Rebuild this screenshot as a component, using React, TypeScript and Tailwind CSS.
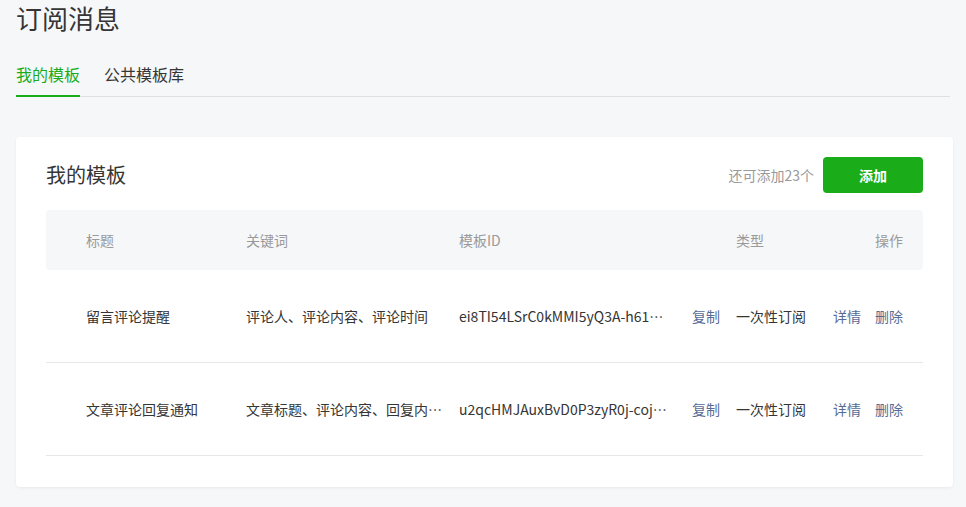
import React from "react";

type Row = {
  title: string;
  keywords: string;
  id: string;
  type: string;
};

const rows: Row[] = [
  {
    title: "留言评论提醒",
    keywords: "评论人、评论内容、评论时间",
    id: "ei8TI54LSrC0kMMI5yQ3A-h61Xb6sQ2wLmNpV7cR",
    type: "一次性订阅",
  },
  {
    title: "文章评论回复通知",
    keywords: "文章标题、评论内容、回复内容、回复时间",
    id: "u2qcHMJAuxBvD0P3zyR0j-coj8Kd2LxWq9TnE4fH",
    type: "一次性订阅",
  },
];

const font = { fontFamily: '"Noto Sans CJK SC", "Noto Sans", sans-serif' };

export default function App() {
  return (
    <div
      className="min-h-[507px] w-[966px] bg-[#f6f7f9] text-[#353535]"
      style={font}
    >
      <div className="px-4">
        <h1 className="h-[36px] text-[26px] leading-[36px] font-normal text-[#353535]">
          订阅消息
        </h1>

        {/* tabs */}
        <div className="mt-[24px] flex gap-6 border-b border-[#e0e0e0] text-[16px]">
          <div className="relative pb-[8px] leading-[28px] text-[#1aad19]">
            我的模板
            <span className="absolute -bottom-px left-0 h-[2px] w-full bg-[#1aad19]" />
          </div>
          <div className="pb-[8px] leading-[28px] text-[#353535]">公共模板库</div>
        </div>
      </div>

      {/* card */}
      <div className="mx-4 mt-[40px] w-[937px] rounded-[4px] bg-white px-[30px] pt-[20px] pb-[31px] shadow-[0_1px_3px_rgba(0,0,0,0.06)]">
        <div className="flex h-[36px] items-center justify-between">
          <h2 className="text-[20px] font-normal text-[#353535]">我的模板</h2>
          <div className="flex items-center gap-[9px]">
            <span className="text-[14px] text-[#9a9a9a]">还可添加23个</span>
            <button className="h-[36px] w-[100px] rounded-[4px] bg-[#1aad19] text-[14px] font-bold text-white">
              添加
            </button>
          </div>
        </div>

        <div className="mt-[17px]">
          <div className="flex h-[60px] items-center rounded-[4px] bg-[#f6f7f9] text-[14px] text-[#9a9a9a]">
            <div className="w-[200px] shrink-0 pl-10">标题</div>
            <div className="w-[213px] shrink-0">关键词</div>
            <div className="w-[277px] shrink-0">模板ID</div>
            <div className="w-[97px] shrink-0">类型</div>
            <div className="flex-1 pr-[20px] text-right whitespace-nowrap">操作</div>
          </div>

          {rows.map((row, i) => (
            <div
              key={i}
              className="flex h-[93px] items-center border-b border-[#e7e7eb] text-[14px] text-[#353535]"
            >
              <div className="w-[200px] shrink-0 pl-10">{row.title}</div>
              <div className="w-[213px] shrink-0 pr-[15px]">
                <div className="truncate">{row.keywords}</div>
              </div>
              <div className="flex w-[277px] shrink-0 items-center pr-[16px]">
                <span className="w-[212px] truncate">{row.id}</span>
                <a className="ml-auto cursor-pointer whitespace-nowrap text-[#576b95]">复制</a>
              </div>
              <div className="w-[97px] shrink-0 whitespace-nowrap">{row.type}</div>
              <div className="flex flex-1 justify-end gap-[14px] pr-[20px] whitespace-nowrap text-[#576b95]">
                <a className="cursor-pointer">详情</a>
                <a className="cursor-pointer">删除</a>
              </div>
            </div>
          ))}
        </div>
      </div>
    </div>
  );
}
